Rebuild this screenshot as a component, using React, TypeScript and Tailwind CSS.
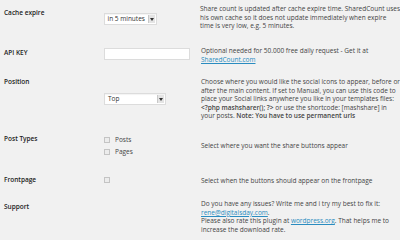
const Arrow = () => (
  <span className="flex items-center justify-center w-[7px] h-full bg-[#e4e4e4] border-l border-[#c8c8c8]">
    <svg width="4" height="3" viewBox="0 0 4 3">
      <path d="M0 0h4L2 3z" fill="#333" />
    </svg>
  </span>
);

const Select = ({ value, width }: { value: string; width: string }) => (
  <div
    className={`flex items-stretch h-[12px] bg-white border border-[#dcdcdc] shadow-[inset_0_1px_1px_rgba(0,0,0,0.05)] ${width}`}
  >
    <span className="flex-1 pl-[3px] text-[6.5px] leading-[10px] text-[#333]">{value}</span>
    <span className="py-[1px] pr-[1px] flex">
      <Arrow />
    </span>
  </div>
);

const Checkbox = () => (
  <span className="inline-block w-[6px] h-[6px] bg-[#ececec] border border-[#c4c4c4]" />
);

const Link = ({ children }: { children: React.ReactNode }) => (
  <a className="text-[#2a8cc0] underline">{children}</a>
);

export default function App() {
  return (
    <div className="w-[400px] h-[240px] bg-[#f1f1f1] font-['Open_Sans',sans-serif] text-[6.5px] leading-[8.6px] text-[#444] overflow-hidden pl-[4px]">
      {/* cache expire */}
      <div className="flex h-[46px] pt-[5px]">
        <div className="w-[100px] mt-[4px] font-semibold text-[#222]">Cache expire</div>
        <div className="w-[97px] mt-[8px]">
          <Select value="in 5 minutes" width="w-[53px]" />
        </div>
        <p className="whitespace-nowrap">
          Share count is updated after cache expire time. SharedCount uses
          <br />
          his own cache so it does not update immediately when expire
          <br />
          time is very low, e.g. 5 minutes.
        </p>
      </div>

      {/* api key */}
      <div className="flex h-[32px] pt-[1px]">
        <div className="w-[100px] mt-[2px] font-semibold text-[#222]">API KEY</div>
        <div className="w-[97px] mt-[1px]">
          <div className="w-[86px] h-[12px] bg-white border border-[#dcdcdc]" />
        </div>
        <p className="whitespace-nowrap">
          Optional needed for 50.000 free daily request - Get it at
          <br />
          <Link>SharedCount.com</Link>
        </p>
      </div>

      {/* position */}
      <div className="flex h-[56px]">
        <div className="w-[100px] font-semibold text-[#222]">Position</div>
        <div className="w-[97px] mt-[15px]">
          <Select value="Top" width="w-[62px]" />
        </div>
        <p className="whitespace-nowrap">
          Choose where you would like the social icons to appear, before or
          <br />
          after the main content. If set to Manual, you can use this code to
          <br />
          place your Social links anywhere you like in your templates files:
          <br />
          <b className="font-semibold">&lt;?php mashsharer(); ?&gt;</b> or use the shortcode: [mashshare] in
          <br />
          your posts. <b className="font-semibold">Note: You have to use permanent urls</b>
        </p>
      </div>

      {/* post types */}
      <div className="flex h-[42px]">
        <div className="w-[100px] mt-[1px] font-semibold text-[#222]">Post Types</div>
        <div className="w-[97px] mt-[2px] flex flex-col gap-[3.4px]">
          <label className="flex items-center gap-[5px]">
            <Checkbox />
            <span>Posts</span>
          </label>
          <label className="flex items-center gap-[5px]">
            <Checkbox />
            <span>Pages</span>
          </label>
        </div>
        <p className="whitespace-nowrap mt-[8px]">Select where you want the share buttons appear</p>
      </div>

      {/* frontpage */}
      <div className="flex h-[24px]">
        <div className="w-[100px] font-semibold text-[#222]">Frontpage</div>
        <div className="w-[97px] mt-[1px]">
          <Checkbox />
        </div>
        <p className="whitespace-nowrap mt-[1px]">Select when the buttons should appear on the frontpage</p>
      </div>

      {/* support */}
      <div className="flex">
        <div className="w-[100px] mt-[3px] font-semibold text-[#222]">Support</div>
        <div className="w-[97px]" />
        <p className="whitespace-nowrap">
          Do you have any issues? Write me and i try my best to fix it:
          <br />
          <Link>rene@digitalsday.com</Link>.
          <br />
          Please also rate this plugin at <Link>wordpress.org</Link>. That helps me to
          <br />
          increase the download rate.
        </p>
      </div>
    </div>
  );
}
